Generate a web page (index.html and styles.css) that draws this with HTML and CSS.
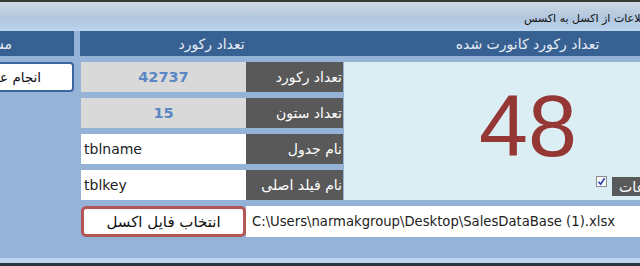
FILE: index.html
```html
<!DOCTYPE html>
<html lang="fa">
<head>
<meta charset="utf-8">
<link rel="stylesheet" href="styles.css">
</head>
<body>
<div class="screen">
  <div class="topline"></div>
  <div class="titlebar"><span class="title" dir="rtl">انتقال اطلاعات از اکسل به اکسس</span></div>
  <div class="main">
    <div class="form">
      <div class="hdr hdr-left" dir="rtl">مشخصات عملیات</div>
      <div class="hdr hdr-mid" dir="rtl">تعداد رکورد</div>
      <div class="hdr hdr-right" dir="rtl">تعداد رکورد کانورت شده</div>

      <div class="run-btn" dir="rtl">انجام عملیات</div>
      <div class="val num r1">42737</div>
      <div class="lbl r1" dir="rtl">تعداد رکورد</div>

      <div class="val num r2">15</div>
      <div class="lbl r2" dir="rtl">تعداد ستون</div>

      <div class="val txt r3">tblname</div>
      <div class="lbl r3" dir="rtl">نام جدول</div>

      <div class="val txt r4">tblkey</div>
      <div class="lbl r4" dir="rtl">نام فیلد اصلی</div>

      <div class="panel">
        <div class="big">48</div>
        <div class="chk-row">
          <span class="chk"><svg width="9" height="9" viewBox="0 0 9 9"><path d="M1.5 4.8 L3.6 7.2 L7.6 1.2" fill="none" stroke="#2a3fa8" stroke-width="1.6"/></svg></span>
          <span class="chk-lbl" dir="rtl">حذف اطلاعات</span>
        </div>
      </div>

      <div class="pick-btn" dir="rtl">انتخاب فایل اکسل</div>
      <div class="path">C:\Users\narmakgroup\Desktop\SalesDataBase (1).xlsx</div>
    </div>
  </div>
  <div class="bottom-band"></div>
  <div class="bottom-line"></div>
</div>
</body>
</html>
```

FILE: styles.css
```css
html, body {
  margin: 0;
  padding: 0;
}
body {
  width: 640px;
  height: 266px;
  overflow: hidden;
  font-family: "DejaVu Sans", sans-serif;
  background: #95b3d7;
}
.screen {
  height: 266px;
  display: flex;
  flex-direction: column;
}
.topline {
  height: 2px;
  background: #3a3a3a;
}
.titlebar {
  height: 29px;
  background: linear-gradient(#cfd9e5, #b0c6de 55%, #bcd4ee);
  display: flex;
  align-items: center;
  padding-top: 3px;
  box-sizing: border-box;
  overflow: hidden;
  white-space: nowrap;
}
.title {
  margin-left: 524px;
  font-size: 11px;
  color: #111;
}
.main {
  flex: 1;
  background: #95b3d7;
  overflow: hidden;
}
.form {
  margin-left: -66px;
  width: 778px;
  display: grid;
  grid-template-columns: 146px 166px 97px 369px;
  grid-template-rows: 25px 30px 30px 30px 30px 31px;
  row-gap: 6px;
}
.hdr {
  background: #376192;
  color: #e6edf5;
  font-size: 14px;
  display: flex;
  align-items: center;
  justify-content: center;
  white-space: nowrap;
  overflow: hidden;
}
.hdr-left {
  grid-column: 1;
  width: 140px;
  justify-content: flex-start;
  padding-right: 62px;
  box-sizing: border-box;
}
.hdr-mid {
  grid-column: 2 / 4;
}
.hdr-right {
  grid-column: 4;
}
.run-btn {
  grid-column: 1;
  grid-row: 2;
  width: 140px;
  box-sizing: border-box;
  background: #fff;
  border: 2px solid #3d66a0;
  border-radius: 4px;
  font-size: 13.5px;
  color: #111;
  display: flex;
  align-items: center;
  justify-content: center;
}
.val {
  grid-column: 2;
  margin-left: 1px;
  display: flex;
  align-items: center;
}
.num {
  background: #d9d9d9;
  color: #5a86c4;
  font-weight: bold;
  font-size: 14.5px;
  justify-content: center;
}
.txt {
  background: #fff;
  color: #222;
  font-size: 14px;
  padding-left: 3px;
}
.lbl {
  grid-column: 3;
  background: #595959;
  color: #fff;
  font-size: 14px;
  display: flex;
  align-items: center;
  justify-content: flex-start;
  padding-right: 1px;
  white-space: nowrap;
}
.r1 { grid-row: 2; }
.r2 { grid-row: 3; }
.r3 { grid-row: 4; }
.r4 { grid-row: 5; }
.panel {
  grid-column: 4;
  grid-row: 2 / 6;
  margin-left: 1px;
  background: #dbeef4;
  display: flex;
  flex-direction: column;
  align-items: center;
}
.big {
  margin-top: 20px;
  font-family: "Liberation Sans", sans-serif;
  font-size: 88px;
  line-height: 88px;
  color: #953735;
}
.chk-row {
  margin-top: auto;
  margin-bottom: 4px;
  align-self: stretch;
  display: flex;
  justify-content: flex-end;
  align-items: flex-start;
  gap: 5px;
  padding-right: 10px;
}
.chk {
  width: 11px;
  height: 11px;
  margin-top: -1px;
  box-sizing: border-box;
  border: 1px solid #8c8c8c;
  background: #f6f8fb;
  display: flex;
  align-items: center;
  justify-content: center;
}
.chk-lbl {
  width: 90px;
  height: 19px;
  box-sizing: border-box;
  background: #595959;
  color: #fff;
  font-size: 14px;
  display: flex;
  align-items: center;
  justify-content: flex-end;
  padding-left: 7px;
  white-space: nowrap;
}
.pick-btn {
  grid-column: 2;
  grid-row: 6;
  margin-left: 1px;
  background: #fff;
  border: 3px solid #b35756;
  border-radius: 5px;
  box-sizing: border-box;
  font-size: 15px;
  color: #111;
  display: flex;
  align-items: center;
  justify-content: center;
}
.path {
  grid-column: 3 / 5;
  grid-row: 6;
  background: #fff;
  color: #222;
  font-size: 13.2px;
  display: flex;
  align-items: center;
  padding-left: 6px;
  white-space: nowrap;
}
.bottom-band {
  height: 5px;
  background: #bcd5ee;
}
.bottom-line {
  height: 3px;
  background: #263441;
}
```
